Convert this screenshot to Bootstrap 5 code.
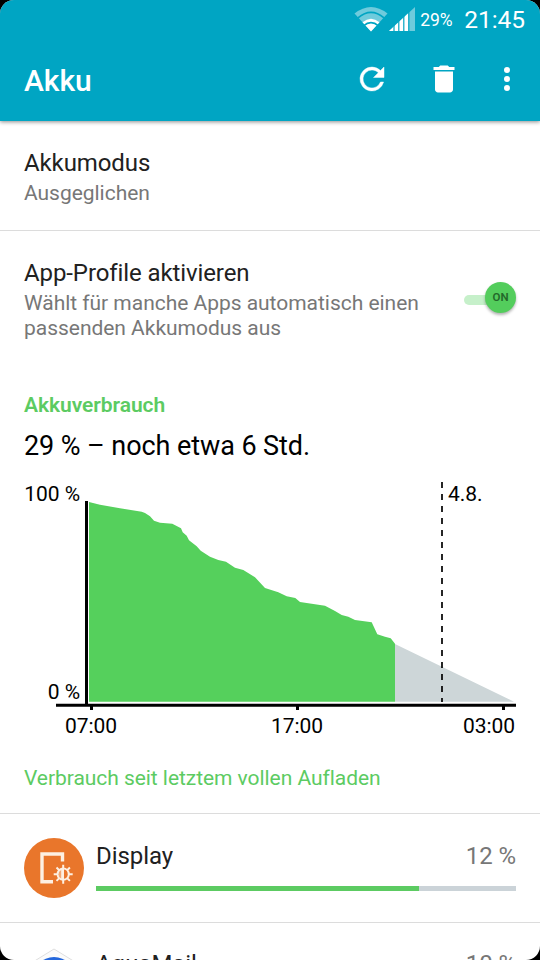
<!DOCTYPE html>
<html lang="de">
<head>
<meta charset="utf-8">
<meta name="viewport" content="width=device-width, initial-scale=1">
<title>Akku</title>
<link href="https://cdn.jsdelivr.net/npm/bootstrap@5.3.0/dist/css/bootstrap.min.css" rel="stylesheet">
<style>
html, body { height: 100%; background: #000; }
body { font-family: Roboto, "Noto Sans", sans-serif; color: #212121; letter-spacing: -.05px; }
.screen { width: 540px; height: 960px; border-radius: 14px; }
.app-header { height: 121px; background: #00a5c3; box-shadow: 0 1px 4px rgba(0,0,0,.45); }
.status-bar { height: 38px; padding-right: 15px; }
.signal-icon { margin: 0 5px 0 1px; }
.status-pct { width: 33px; font-size: 17.500px; margin: 2px 11px 0 0; }
.status-time { font-size: 24.500px; line-height: 36px; padding-top: 1px; }
.toolbar { height: 82px; padding: 0 15px 0 24px; }
.app-title { font-size: 30px; line-height: 36px; font-weight: 500; padding-top: 3px; }
.trash-icon { margin: 0 21px 0 30px; }
.pref { padding: 26px 24px 0; }
.pref-mode { height: 110px; border-bottom: 1px solid #dcdcdc; }
.pref-title { font-size: 24px; line-height: 32px; margin-bottom: 2px; letter-spacing: -.1px; }
.pref-sub { font-size: 21px; line-height: 25px; color: #777; letter-spacing: -.03px; }
.pref-profile { height: 162px; }
.toggle { width: 52px; height: 36px; margin-top: 25px; }
.toggle-track { left: 0; top: 13px; width: 36px; height: 10px; border-radius: 5px; background: #c6f0ca; }
.toggle-thumb { right: 0; top: 0; width: 31px; height: 31px; padding-top: 1px; background: #53cd5c; box-shadow: 0 2px 3px rgba(0,0,0,.3); font-size: 11.500px; font-weight: 600; color: #23682a; }
.green-text { color: #5ccb62; font-size: 21px; line-height: 25px; }
.estimate { font-size: 27px; line-height: 32px; margin-top: 12px; color: #000; letter-spacing: -.08px; }
.chart { height: 304px; }
.since { padding: 0 24px 22px; }
.usage { height: 109px; padding: 0 24px; border-top: 1px solid #dcdcdc; }
.usage-icon { width: 60px; height: 60px; margin: 24px 12px 0 0; }
.usage-line { font-size: 24px; line-height: 32px; margin-top: 26px; }
.usage + .usage .usage-line { margin-top: 25px; }
.usage-value { color: #777; }
.usage-bar { height: 5px; margin-top: 14px; border-radius: 0; background: #cbd3d8; }
.usage-bar .progress-bar { background: #5ccb62; }
</style>
<script src="https://cdn.jsdelivr.net/npm/bootstrap@5.3.0/dist/js/bootstrap.bundle.min.js"></script>
</head>
<body class="overflow-hidden">
<div class="screen bg-white overflow-hidden">
  <header class="app-header text-white position-relative">
    <div class="status-bar d-flex justify-content-end align-items-center">
      <svg width="34" height="25" viewBox="0 0 34 25">
        <path d="M17 24.500L.5 6.500Q17-6.500 33.500 6.500Z" fill="#6fcbdc"/>
        <path d="M4 10.800Q17-.2 30 10.800" fill="none" stroke="#00a5c3" stroke-width="1.700"/>
        <path d="M17 24.500L8.500 15.200Q17 8.200 25.500 15.200Z" fill="#fff"/>
        <path d="M9.500 18.800Q17 12.300 24.500 18.800" fill="none" stroke="#00a5c3" stroke-width="1.600"/>
      </svg>
      <svg class="signal-icon" width="26" height="24" viewBox="0 0 26 24">
        <path d="M0 24L26 0V24Z" fill="#6fcbdc"/>
        <path d="M0 24L19.500 6V24Z" fill="#fff"/>
        <path d="M5 17V24M9.800 12V24M14.800 8V24M19.800 4V24" stroke="#00a5c3" stroke-width="1.200"/>
      </svg>
      <span class="status-pct text-nowrap">29%</span>
      <span class="status-time">21:45</span>
    </div>
    <div class="toolbar d-flex align-items-center">
      <h1 class="app-title mb-0 me-auto">Akku</h1>
      <svg width="36" height="36" viewBox="0 0 24 24" fill="#fff"><path d="M17.650 6.350A7.960 7.960 0 0 0 12 4a8 8 0 1 0 7.730 10h-2.080A6 6 0 1 1 12 6c1.660 0 3.140.69 4.220 1.780L13 11h7V4z" stroke="#fff" stroke-width=".3"/></svg>
      <svg class="trash-icon" width="48" height="36" viewBox="-4 0 32 24" fill="#fff"><path d="M6 19c0 1.100.9 2 2 2h8c1.100 0 2-.9 2-2V7H6v12zM19 4h-3.500l-1-1h-5l-1 1H5v2h14V4z"/></svg>
      <svg width="36" height="36" viewBox="0 0 24 24" fill="#fff"><circle cx="12" cy="6" r="2"/><circle cx="12" cy="12" r="2"/><circle cx="12" cy="18" r="2"/></svg>
    </div>
  </header>
  <main>
    <section class="pref pref-mode">
      <div class="pref-title">Akkumodus</div>
      <div class="pref-sub">Ausgeglichen</div>
    </section>
    <section class="pref pref-profile d-flex justify-content-between">
      <div>
        <div class="pref-title">App-Profile aktivieren</div>
        <div class="pref-sub">Wählt für manche Apps automatisch einen<br>passenden Akkumodus aus</div>
      </div>
      <div class="toggle position-relative flex-shrink-0">
        <div class="toggle-track position-absolute"></div>
        <div class="toggle-thumb position-absolute rounded-circle d-flex align-items-center justify-content-center">ON</div>
      </div>
    </section>
    <section>
      <div class="px-4">
        <div class="green-text fw-semibold">Akkuverbrauch</div>
        <div class="estimate">29 % – noch etwa 6 Std.</div>
      </div>
      <svg class="chart d-block w-100" viewBox="0 462 540 304">
        <path d="M89 502L100 504.700L120 508.300L141.700 511.700L145 513L150 516.300L154 520.700L160 522.700L172.300 523.700L181 528.300L182.700 532.300L186.700 535.700L189 540.300L196.700 546.300L200.700 550.700L210 556.700L218.300 560L226 561.700L235 567.700L243.300 570L255 577.300L265 588L278.300 592.300L286.700 596.300L295.300 598L300 602L325 605.700L335 611L341.700 615L348.300 616.700L355 620L371.700 622.300L377.300 634.300L385 636.700L390.700 638.300L395 643.700V701.700H89Z" fill="#55d05c"/>
        <path d="M395 644L514 701.700H395Z" fill="#cdd6d8"/>
        <path d="M442 482V702" stroke="#000" stroke-width="1.700" stroke-dasharray="6 6"/>
        <path d="M86.500 501V705M56 705.300H516" stroke="#000" stroke-width="3" fill="none"/>
        <path d="M91.500 706V710M297.500 706V710M503.500 706V710" stroke="#000" stroke-width="3"/>
        <g font-size="21" fill="#000">
          <text x="80" y="501" text-anchor="end">100 %</text>
          <text x="80" y="699" text-anchor="end">0 %</text>
          <text x="448" y="501">4.8.</text>
          <text x="91" y="733" text-anchor="middle">07:00</text>
          <text x="297" y="733" text-anchor="middle">17:00</text>
          <text x="515" y="733" text-anchor="end">03:00</text>
        </g>
      </svg>
      <div class="since green-text">Verbrauch seit letztem vollen Aufladen</div>
    </section>
    <section>
      <div class="usage d-flex">
        <svg class="usage-icon flex-shrink-0" viewBox="0 0 60 60">
          <circle cx="30" cy="30" r="30" fill="#e9762b"/>
          <path d="M38.500 23.500V16H18V43.800H29" fill="none" stroke="#fdf0e2" stroke-width="3.400"/>
          <circle cx="39.200" cy="36.200" r="5.800" fill="#fdf0e2"/>
          <path d="M39.200 26.700V45.700M29.700 36.200H48.700M32.500 29.500L45.900 42.900M45.900 29.500L32.500 42.900" stroke="#fdf0e2" stroke-width="2"/>
          <circle cx="39.200" cy="36.200" r="6.600" fill="#fdf0e2"/>
          <path d="M40 31.600a4.700 4.700 0 0 1 0 9.200z" fill="#e9762b"/>
          <path d="M37.200 32a4.600 4.600 0 0 0 0 8.400z" fill="#e9762b" opacity=".6"/>
        </svg>
        <div class="flex-grow-1">
          <div class="usage-line d-flex justify-content-between"><span>Display</span><span class="usage-value">12 %</span></div>
          <div class="progress usage-bar"><div class="progress-bar" style="width:76.900%"></div></div>
        </div>
      </div>
      <div class="usage d-flex">
        <svg class="usage-icon flex-shrink-0" viewBox="0 0 60 60">
          <path d="M30 2L56 18V54H4V18Z" fill="#fbfbfb" stroke="#dedede"/>
          <circle cx="30" cy="31.500" r="21.500" fill="#2467dc"/>
        </svg>
        <div class="flex-grow-1">
          <div class="usage-line d-flex justify-content-between"><span>AquaMail</span><span class="usage-value">10 %</span></div>
          <div class="progress usage-bar"><div class="progress-bar" style="width:64%"></div></div>
        </div>
      </div>
    </section>
  </main>
</div>
</body>
</html>
